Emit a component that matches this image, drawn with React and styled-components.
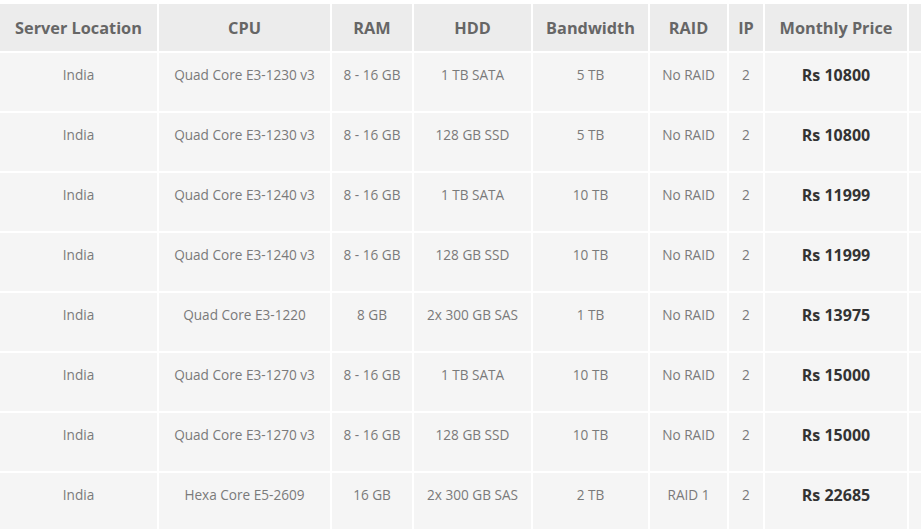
import React from 'react';
import styled, { createGlobalStyle } from 'styled-components';

const GlobalStyle = createGlobalStyle`
  html, body {
    margin: 0;
    padding: 0;
    background: #fff;
    overflow: hidden;
  }
`;

const Wrapper = styled.div`
  width: 921px;
  height: 529px;
  overflow: hidden;
  padding-top: 2px;
`;

const Table = styled.table`
  border-collapse: separate;
  border-spacing: 2px;
  table-layout: fixed;
  width: 1033px;
  margin-left: -2px;
  font-family: "Open Sans", "Liberation Sans", sans-serif;
`;

const HeadCell = styled.th`
  height: 47px;
  padding: 0 4px;
  background: #ececec;
  color: #666;
  font-size: 16.3px;
  font-weight: 700;
  text-align: center;
  vertical-align: middle;
  white-space: nowrap;
`;

const Row = styled.tr`
  height: 58px;
`;

const Cell = styled.td`
  padding: 12px 4px 0;
  background: #f5f5f5;
  color: ${p => (p.$price ? '#333' : '#7a7a7a')};
  font-size: ${p => (p.$price ? '16px' : '13.6px')};
  font-weight: ${p => (p.$price ? 700 : 400)};
  line-height: 20px;
  text-align: center;
  vertical-align: top;
  white-space: nowrap;
`;

const widths = [157, 171, 80, 117, 115, 77, 34, 142, 120];
const headers = ['Server Location', 'CPU', 'RAM', 'HDD', 'Bandwidth', 'RAID', 'IP', 'Monthly Price', ''];

const servers = [
  ['India', 'Quad Core E3-1230 v3', '8 - 16 GB', '1 TB SATA', '5 TB', 'No RAID', '2', 'Rs 10800'],
  ['India', 'Quad Core E3-1230 v3', '8 - 16 GB', '128 GB SSD', '5 TB', 'No RAID', '2', 'Rs 10800'],
  ['India', 'Quad Core E3-1240 v3', '8 - 16 GB', '1 TB SATA', '10 TB', 'No RAID', '2', 'Rs 11999'],
  ['India', 'Quad Core E3-1240 v3', '8 - 16 GB', '128 GB SSD', '10 TB', 'No RAID', '2', 'Rs 11999'],
  ['India', 'Quad Core E3-1220', '8 GB', '2x 300 GB SAS', '1 TB', 'No RAID', '2', 'Rs 13975'],
  ['India', 'Quad Core E3-1270 v3', '8 - 16 GB', '1 TB SATA', '10 TB', 'No RAID', '2', 'Rs 15000'],
  ['India', 'Quad Core E3-1270 v3', '8 - 16 GB', '128 GB SSD', '10 TB', 'No RAID', '2', 'Rs 15000'],
  ['India', 'Hexa Core E5-2609', '16 GB', '2x 300 GB SAS', '2 TB', 'RAID 1', '2', 'Rs 22685'],
];

const App = () => {
  return (
    <Wrapper>
      <GlobalStyle />
      <Table>
        <colgroup>
          {widths.map((w, i) => <col key={i} style={{ width: w }} />)}
        </colgroup>
        <thead>
          <tr>
            {headers.map((h, i) => <HeadCell key={i}>{h}</HeadCell>)}
          </tr>
        </thead>
        <tbody>
          {servers.map((row, r) => (
            <Row key={r}>
              {row.map((v, i) => (
                <Cell key={i} $price={i === 7}>{v}</Cell>
              ))}
              <Cell />
            </Row>
          ))}
        </tbody>
      </Table>
    </Wrapper>
  );
};

export default App;
